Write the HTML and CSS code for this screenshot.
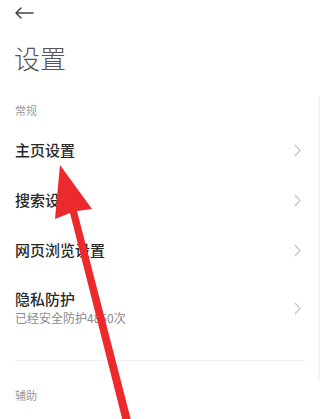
FILE: index.html
```html
<!DOCTYPE html>
<html lang="zh-CN">
<head>
<meta charset="utf-8">
<title>设置</title>
<link rel="stylesheet" href="styles.css">
</head>
<body>
<div class="page">
  <div class="header">
    <svg class="back" width="20" height="12" viewBox="0 0 20 12"><path d="M19 6H2M7 1L2 6l5 5" fill="none" stroke="#444" stroke-width="1.5" stroke-linecap="round" stroke-linejoin="round"/></svg>
  </div>
  <div class="title">设置</div>
  <div class="section-label">常规</div>
  <div class="row">
    <div class="row-text"><div class="row-title">主页设置</div></div>
    <svg class="chev" width="7" height="13" viewBox="0 0 7 13"><path d="M1 1l5 5.5L1 12" fill="none" stroke="#c4c4c4" stroke-width="1.2"/></svg>
  </div>
  <div class="row">
    <div class="row-text"><div class="row-title">搜索设置</div></div>
    <svg class="chev" width="7" height="13" viewBox="0 0 7 13"><path d="M1 1l5 5.5L1 12" fill="none" stroke="#c4c4c4" stroke-width="1.2"/></svg>
  </div>
  <div class="row">
    <div class="row-text"><div class="row-title">网页浏览设置</div></div>
    <svg class="chev" width="7" height="13" viewBox="0 0 7 13"><path d="M1 1l5 5.5L1 12" fill="none" stroke="#c4c4c4" stroke-width="1.2"/></svg>
  </div>
  <div class="row tall">
    <div class="row-text">
      <div class="row-title">隐私防护</div>
      <div class="row-sub">已经安全防护4850次</div>
    </div>
    <svg class="chev" width="7" height="13" viewBox="0 0 7 13"><path d="M1 1l5 5.5L1 12" fill="none" stroke="#c4c4c4" stroke-width="1.2"/></svg>
  </div>
  <div class="divider"></div>
  <div class="section-label second">辅助</div>
  <div class="scrollbar"></div>
  <svg class="annot" width="325" height="419" viewBox="0 0 325 419">
    <polygon points="60,165 92,209 77,211 132,424 124,426 70,213 55,219" fill="#ec2a2e"/>
  </svg>
</div>
</body>
</html>
```
FILE: styles.css
```css
html, body {
  margin: 0;
  padding: 0;
  background: #fff;
}
body {
  font-family: "Noto Sans CJK SC", "Noto Sans", sans-serif;
  color: #333;
}
.page {
  position: relative;
  width: 325px;
  height: 419px;
  overflow: hidden;
}
.header {
  height: 25px;
  display: flex;
  align-items: center;
  padding-left: 14px;
}
.back {
  display: block;
}
.title {
  height: 66px;
  line-height: 66px;
  padding-left: 14px;
  font-size: 26px;
  font-weight: 300;
  color: #555;
}
.section-label {
  height: 16px;
  line-height: 16px;
  padding: 11px 0 7px 15px;
  font-size: 11px;
  color: #9a9a9a;
}
.section-label.second {
  padding-top: 26px;
}
.row {
  height: 50px;
  display: flex;
  align-items: center;
  justify-content: space-between;
  padding: 0 24px 0 15px;
}
.row.tall {
  height: 66px;
}
.row-title {
  font-size: 15px;
  line-height: 20px;
  font-weight: 500;
  color: #2a2a2a;
}
.row-sub {
  font-size: 12px;
  line-height: 18px;
  color: #8a8a8a;
}
.chev {
  display: block;
}
.divider {
  height: 1px;
  background: #eeeeee;
  margin: 19px 20px 0 15px;
}
.scrollbar {
  position: absolute;
  left: 318px;
  top: 97px;
  width: 2px;
  height: 285px;
  background: #f4f4f4;
}
.annot {
  position: absolute;
  left: 0;
  top: 0;
}
```
